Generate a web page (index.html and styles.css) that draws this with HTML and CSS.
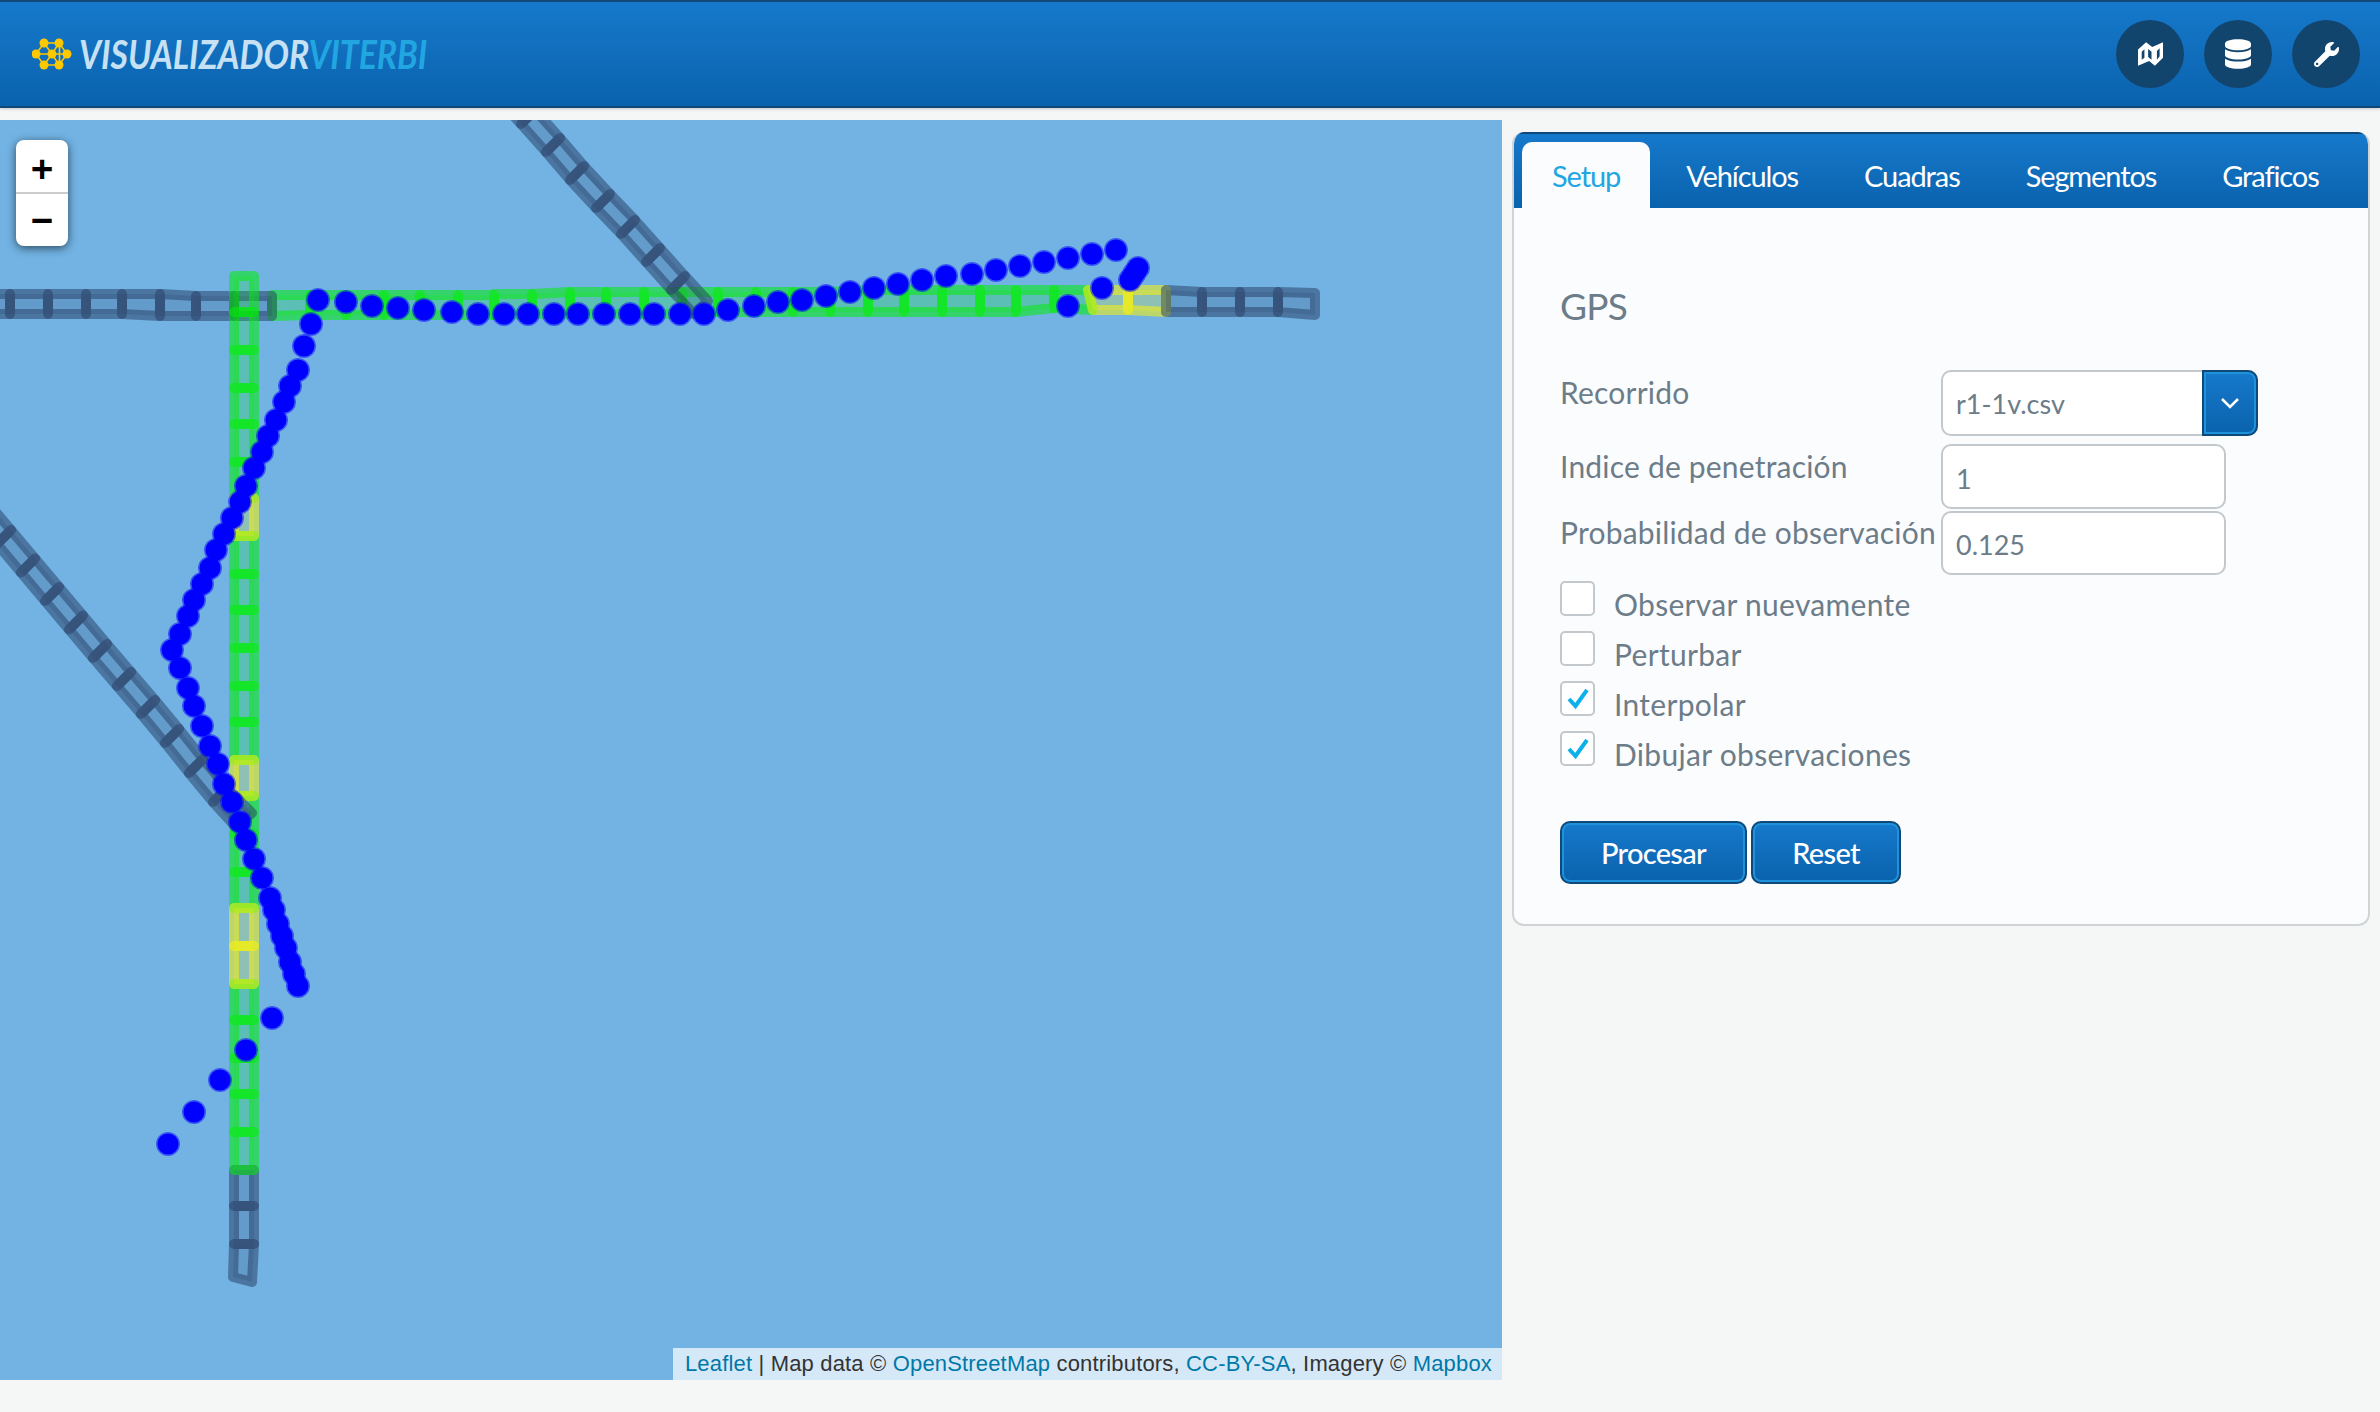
FILE: index.html
```html
<!DOCTYPE html>
<html lang="es">
<head>
<meta charset="utf-8">
<title>Visualizador Viterbi</title>
<link rel="stylesheet" href="styles.css">
</head>
<body>
<header class="topbar">
  <div class="brand">
    <svg class="brand-mark" viewBox="0 0 40 32" aria-hidden="true">
      <g class="mark-lines">
        <path d="M12 5 27 5 35 16 27 27 12 27 4 16Z"/>
        <path d="M12 5 20 16 12 27M27 5 20 16 27 27M4 16H35M27.500 5.500V27"/>
      </g>
      <g class="mark-nodes">
        <circle cx="12" cy="5" r="4.500"/><circle cx="27" cy="5" r="4.500"/>
        <circle cx="4" cy="16" r="4.500"/><circle cx="20" cy="16" r="4.500"/><circle cx="35" cy="16" r="4.500"/>
        <circle cx="12" cy="27" r="4.500"/><circle cx="27" cy="27" r="4.500"/>
      </g>
    </svg>
    <span class="brand-name"><span class="brand-a">VISUALIZADOR</span><span class="brand-b">VITERBI</span></span>
  </div>
  <nav class="top-actions">
    <a class="round-btn" aria-label="Mapa">
      <svg class="ico-map" viewBox="38 34 74 70" aria-hidden="true"><path fill-rule="evenodd" d="M38 56 62 34 80 48 112 34V80L88 104 71 90 38 104ZM49 62V86L57 80V55ZM68 54V78L78 86V62ZM94 60V86L102 76V52Z"/></svg>
    </a>
    <a class="round-btn" aria-label="Datos">
      <svg class="ico-db" viewBox="0 0 448 512" aria-hidden="true"><path d="M448 73.143v45.714C448 159.143 347.667 192 224 192S0 159.143 0 118.857V73.143C0 32.857 100.333 0 224 0s224 32.857 224 73.143zM448 176v102.857C448 319.143 347.667 352 224 352S0 319.143 0 278.857V176c48.125 33.143 136.208 48.572 224 48.572S399.874 209.143 448 176zm0 160v102.857C448 479.143 347.667 512 224 512S0 479.143 0 438.857V336c48.125 33.143 136.208 48.572 224 48.572S399.874 369.143 448 336z"/></svg>
    </a>
    <a class="round-btn" aria-label="Ajustes">
      <svg class="ico-wrench" viewBox="0 0 512 512" aria-hidden="true"><path d="M507.730 109.100c-2.240-9.030-13.540-12.090-20.120-5.510l-74.360 74.360-67.880-11.310-11.310-67.880 74.360-74.360c6.620-6.620 3.430-17.900-5.660-20.160-47.380-11.740-99.550.91-136.580 37.930-39.640 39.640-50.550 97.100-34.050 147.200L18.740 402.760c-24.990 24.990-24.990 65.510 0 90.500 24.990 24.990 65.510 24.990 90.500 0l213.210-213.210c50.120 16.710 107.470 5.680 147.370-34.220 37.070-37.070 49.700-89.320 37.910-136.730zM64 472c-13.250 0-24-10.750-24-24 0-13.260 10.750-24 24-24s24 10.740 24 24c0 13.250-10.750 24-24 24z"/></svg>
    </a>
  </nav>
</header>

<main class="layout">
  <section class="map">
    <svg class="map-canvas" viewBox="0 120 1502 1260" aria-hidden="true">
      <g class="cells green">
        <polygon points="272,295 310,295 310,315 272,316"/>
        <polygon points="310,295 346,295 346,315 310,315"/>
        <polygon points="346,295 384,295 384,315 346,315"/>
        <polygon points="384,295 420,295 420,315 384,315"/>
        <polygon points="420,295 458,295 458,315 420,315"/>
        <polygon points="458,295 494,295 494,315 458,315"/>
        <polygon points="494,294 532,294 532,314 494,315"/>
        <polygon points="532,294 570,292 570,314 532,314"/>
        <polygon points="570,292 606,292 606,314 570,314"/>
        <polygon points="606,292 644,292 644,314 606,314"/>
        <polygon points="644,292 682,292 682,314 644,314"/>
        <polygon points="682,292 718,292 718,312 682,314"/>
        <polygon points="718,292 756,292 756,312 718,312"/>
        <polygon points="756,292 793,292 793,312 756,312"/>
        <polygon points="793,292 830,292 830,312 793,312"/>
        <polygon points="830,292 868,290 868,312 830,312"/>
        <polygon points="868,290 904,290 904,312 868,312"/>
        <polygon points="904,290 942,290 942,312 904,312"/>
        <polygon points="942,290 980,290 980,312 942,312"/>
        <polygon points="980,290 1016,290 1016,312 980,312"/>
        <polygon points="1016,290 1054,290 1054,308 1016,312"/>
        <polygon points="1054,290 1088,290 1093,310 1054,308"/>
      </g>
      <g class="cells yellow">
        <polygon points="1088,290 1128,290 1128,310 1093,310"/>
        <polygon points="1128,290 1166,290 1166,312 1128,310"/>
      </g>
      <g class="cells grey">
        <polygon points="-26,294 10,294 10,314 -26,314"/>
        <polygon points="10,294 48,294 48,314 10,314"/>
        <polygon points="48,294 86,294 86,314 48,314"/>
        <polygon points="86,294 122,294 122,314 86,314"/>
        <polygon points="122,294 160,294 160,316 122,314"/>
        <polygon points="160,294 196,296 196,316 160,316"/>
        <polygon points="196,296 234,296 234,316 196,316"/>
        <polygon points="234,296 272,296 272,316 234,316"/>
        <polygon points="1166,290 1202,292 1202,312 1166,312"/>
        <polygon points="1202,292 1240,292 1240,312 1202,312"/>
        <polygon points="1240,292 1278,292 1278,312 1240,312"/>
        <polygon points="1278,292 1315,293 1315,315 1278,312"/>
        <polygon points="234,1170 254,1170 254,1206 234,1206"/>
        <polygon points="234,1206 254,1206 254,1244 234,1244"/>
        <polygon points="234,1244 254,1244 252,1282 233,1277"/>
      </g>
      <g class="cells green">
        <polygon points="234,276 254,276 254,312 234,312"/>
        <polygon points="234,312 254,312 254,350 234,350"/>
        <polygon points="234,350 254,350 254,388 234,388"/>
        <polygon points="234,388 254,388 254,424 234,424"/>
        <polygon points="234,424 254,424 254,462 234,462"/>
        <polygon points="234,462 254,462 254,498 234,498"/>
        <polygon points="234,536 254,536 254,574 234,574"/>
        <polygon points="234,574 254,574 254,610 234,610"/>
        <polygon points="234,610 254,610 254,648 234,648"/>
        <polygon points="234,648 254,648 254,686 234,686"/>
        <polygon points="234,686 254,686 254,722 234,722"/>
        <polygon points="234,722 254,722 254,760 234,760"/>
        <polygon points="234,796 254,796 254,834 234,834"/>
        <polygon points="234,834 254,834 254,872 234,872"/>
        <polygon points="234,872 254,872 254,908 234,908"/>
        <polygon points="234,984 254,984 254,1020 234,1020"/>
        <polygon points="234,1020 254,1020 254,1058 234,1058"/>
        <polygon points="234,1058 254,1058 254,1094 234,1094"/>
        <polygon points="234,1094 254,1094 254,1132 234,1132"/>
        <polygon points="234,1132 254,1132 254,1170 234,1170"/>
      </g>
      <g class="cells yellow">
        <polygon points="234,498 254,498 254,536 234,536"/>
        <polygon points="234,760 254,760 254,796 234,796"/>
        <polygon points="234,908 254,908 254,946 234,946"/>
        <polygon points="234,946 254,946 254,984 234,984"/>
      </g>
      <g class="cells grey">
        <polygon points="-27,515.500 -13,501.500 11,530 -3,544"/>
        <polygon points="-3,544 11,530 35,558.500 21,572.500"/>
        <polygon points="21,572.500 35,558.500 59,587 45,601"/>
        <polygon points="45,601 59,587 83,615.500 69,629.500"/>
        <polygon points="69,629.500 83,615.500 107,644 93,658"/>
        <polygon points="93,658 107,644 131,672 117,686"/>
        <polygon points="117,686 131,672 155,700 141,714"/>
        <polygon points="141,714 155,700 179,729 165,743"/>
        <polygon points="165,743 179,729 203,759 189,773"/>
        <polygon points="189,773 203,759 227,788 213,802"/>
        <polygon points="213,802 227,788 252,813 235,826"/>
        <polygon points="496,97 510,83 535,110 521,124"/>
        <polygon points="521,124 535,110 560,138 546,152"/>
        <polygon points="546,152 560,138 584,166 570,180"/>
        <polygon points="570,180 584,166 610,194 596,208"/>
        <polygon points="596,208 610,194 635,220 621,234"/>
        <polygon points="621,234 635,220 660,248 646,262"/>
        <polygon points="646,262 660,248 685,276 671,290"/>
        <polygon points="671,290 685,276 708,301 694,314"/>
      </g>
      <g class="dots">
        <circle cx="318" cy="300" r="10.500"/><circle cx="346" cy="302" r="10.500"/><circle cx="372" cy="306" r="10.500"/><circle cx="398" cy="308" r="10.500"/><circle cx="424" cy="310" r="10.500"/><circle cx="452" cy="312" r="10.500"/><circle cx="478" cy="314" r="10.500"/><circle cx="504" cy="314" r="10.500"/><circle cx="528" cy="314" r="10.500"/><circle cx="554" cy="314" r="10.500"/><circle cx="578" cy="314" r="10.500"/><circle cx="604" cy="314" r="10.500"/><circle cx="630" cy="314" r="10.500"/><circle cx="654" cy="314" r="10.500"/><circle cx="680" cy="314" r="10.500"/><circle cx="704" cy="314" r="10.500"/><circle cx="728" cy="310" r="10.500"/><circle cx="754" cy="306" r="10.500"/><circle cx="778" cy="302" r="10.500"/><circle cx="802" cy="300" r="10.500"/><circle cx="826" cy="296" r="10.500"/><circle cx="850" cy="292" r="10.500"/><circle cx="874" cy="288" r="10.500"/><circle cx="898" cy="284" r="10.500"/><circle cx="922" cy="280" r="10.500"/><circle cx="946" cy="276" r="10.500"/><circle cx="972" cy="274" r="10.500"/><circle cx="996" cy="270" r="10.500"/><circle cx="1020" cy="266" r="10.500"/><circle cx="1044" cy="262" r="10.500"/><circle cx="1068" cy="258" r="10.500"/><circle cx="1092" cy="254" r="10.500"/><circle cx="1116" cy="250" r="10.500"/><circle cx="1138" cy="268" r="10.500"/><circle cx="1134" cy="274" r="10.500"/><circle cx="1130" cy="280" r="10.500"/><circle cx="1102" cy="288" r="10.500"/><circle cx="1068" cy="306" r="10.500"/>
        <circle cx="311" cy="324" r="10.500"/><circle cx="304" cy="346" r="10.500"/><circle cx="298" cy="370" r="10.500"/><circle cx="290" cy="386" r="10.500"/><circle cx="284" cy="402" r="10.500"/><circle cx="276" cy="420" r="10.500"/><circle cx="268" cy="436" r="10.500"/><circle cx="262" cy="452" r="10.500"/><circle cx="254" cy="468" r="10.500"/><circle cx="246" cy="486" r="10.500"/><circle cx="240" cy="502" r="10.500"/><circle cx="232" cy="518" r="10.500"/><circle cx="224" cy="534" r="10.500"/><circle cx="216" cy="550" r="10.500"/><circle cx="210" cy="568" r="10.500"/><circle cx="202" cy="584" r="10.500"/><circle cx="194" cy="600" r="10.500"/><circle cx="188" cy="616" r="10.500"/><circle cx="180" cy="634" r="10.500"/><circle cx="172" cy="650" r="10.500"/><circle cx="180" cy="668" r="10.500"/><circle cx="188" cy="688" r="10.500"/><circle cx="194" cy="706" r="10.500"/><circle cx="202" cy="726" r="10.500"/><circle cx="210" cy="746" r="10.500"/><circle cx="218" cy="764" r="10.500"/><circle cx="224" cy="784" r="10.500"/><circle cx="232" cy="802" r="10.500"/><circle cx="240" cy="822" r="10.500"/><circle cx="246" cy="840" r="10.500"/><circle cx="254" cy="859" r="10.500"/><circle cx="262" cy="878" r="10.500"/><circle cx="270" cy="898" r="10.500"/><circle cx="274" cy="910" r="10.500"/><circle cx="278" cy="924" r="10.500"/><circle cx="282" cy="936" r="10.500"/><circle cx="286" cy="948" r="10.500"/><circle cx="290" cy="962" r="10.500"/><circle cx="294" cy="974" r="10.500"/><circle cx="298" cy="986" r="10.500"/><circle cx="272" cy="1018" r="10.500"/><circle cx="246" cy="1050" r="10.500"/><circle cx="220" cy="1080" r="10.500"/><circle cx="194" cy="1112" r="10.500"/><circle cx="168" cy="1144" r="10.500"/>
      </g>
    </svg>
    <div class="zoom-ctl">
      <a class="zoom-btn zoom-in">+</a>
      <a class="zoom-btn zoom-out">−</a>
    </div>
    <div class="attribution"><a>Leaflet</a> | Map data © <a>OpenStreetMap</a> contributors, <a>CC-BY-SA</a>, Imagery © <a>Mapbox</a></div>
  </section>

  <aside class="panel">
    <ul class="tabs">
      <li class="tab tab-active">Setup</li>
      <li class="tab">Vehículos</li>
      <li class="tab">Cuadras</li>
      <li class="tab">Segmentos</li>
      <li class="tab">Graficos</li>
    </ul>
    <div class="panel-body">
      <h2 class="section-title">GPS</h2>
      <div class="form-row row-select">
        <label class="field-label">Recorrido</label>
        <div class="select">
          <span class="select-value">r1-1v.csv</span>
          <span class="select-btn">
            <svg viewBox="0 0 20 12" aria-hidden="true"><path d="M2 2 10 10 18 2"/></svg>
          </span>
        </div>
      </div>
      <div class="form-row row-a">
        <label class="field-label">Indice de penetración</label>
        <input class="text-input" type="text" value="1">
      </div>
      <div class="form-row row-b">
        <label class="field-label">Probabilidad de observación</label>
        <input class="text-input" type="text" value="0.125">
      </div>
      <div class="checks">
        <div class="check-row"><span class="check-box"></span><span class="check-label">Observar nuevamente</span></div>
        <div class="check-row"><span class="check-box"></span><span class="check-label">Perturbar</span></div>
        <div class="check-row"><span class="check-box"><svg viewBox="0 0 24 24" aria-hidden="true"><path d="M3 12 9.500 19 21 3"/></svg></span><span class="check-label">Interpolar</span></div>
        <div class="check-row"><span class="check-box"><svg viewBox="0 0 24 24" aria-hidden="true"><path d="M3 12 9.500 19 21 3"/></svg></span><span class="check-label">Dibujar observaciones</span></div>
      </div>
      <div class="actions">
        <button class="btn btn-process" type="button">Procesar</button>
        <button class="btn btn-reset" type="button">Reset</button>
      </div>
    </div>
  </aside>
</main>
</body>
</html>
```
FILE: styles.css
```css
* { box-sizing: border-box; }
html, body { height: 100%; }
body {
  margin: 0;
  background: #f5f7f7;
  font-family: Lato, "Noto Sans", sans-serif;
  color: #6c7d89;
  overflow: hidden;
}

/* top bar */
.topbar {
  height: 108px;
  display: flex;
  align-items: center;
  justify-content: space-between;
  padding: 0 20px 0 32px;
  background: linear-gradient(#1679cb, #0a62ad);
  border-top: 2px solid #10487a;
  border-bottom: 2px solid #10487a;
  box-shadow: 0 1px 3px rgba(0, 0, 0, .2);
}
.brand { display: flex; align-items: center; gap: 7px; }
.brand-mark { width: 40px; height: 32px; }
.mark-lines path { fill: none; stroke: #fdc800; stroke-width: 1.6; }
.mark-nodes circle { fill: #fdc800; }
.brand-name {
  display: inline-block;
  font-family: Lato, sans-serif;
  font-style: italic;
  font-size: 40px;
  line-height: 1;
  white-space: nowrap;
  transform: scaleX(.845);
  transform-origin: left center;
}
.brand-a { color: #c6e1f4; font-weight: 700; }
.brand-b { color: #22a6e2; font-weight: 700; }
.top-actions { display: flex; gap: 20px; }
.round-btn {
  width: 68px;
  height: 68px;
  border-radius: 50%;
  background: #12456e;
  display: flex;
  align-items: center;
  justify-content: center;
}
.round-btn svg { fill: #fff; display: block; }
.ico-map { width: 25px; height: 26px; }
.ico-db { width: 26px; height: 30px; }
.ico-wrench { width: 25px; height: 25px; }

/* page */
.layout { display: flex; align-items: flex-start; margin-top: 12px; }

/* map */
.map {
  position: relative;
  width: 1502px;
  height: 1260px;
  flex: none;
  background: #72b3e4;
  overflow: hidden;
}
.map-canvas { display: block; width: 100%; height: 100%; }
.cells polygon { stroke-width: 10; stroke-linejoin: round; stroke-opacity: .53; fill-opacity: .2; }
.grey polygon { stroke: #2a4166; fill: #2a4166; }
.green polygon { stroke: #00f000; fill: #00f000; }
.yellow polygon { stroke: #fff500; fill: #fff500; }
.dots circle { fill: #0000ff; stroke: #0000ff; stroke-width: 3; stroke-opacity: .5; }
.zoom-ctl {
  position: absolute;
  left: 16px;
  top: 20px;
  width: 52px;
  border-radius: 8px;
  background: #fff;
  box-shadow: 0 2px 10px rgba(0, 0, 0, .6);
  overflow: hidden;
}
.zoom-btn {
  display: block;
  height: 52px;
  line-height: 52px;
  text-align: center;
  font-family: "DejaVu Sans Mono", monospace;
  font-weight: 700;
  font-size: 36px;
  color: #000;
}
.zoom-in { line-height: 58px; }
.zoom-out { height: 54px; border-top: 2px solid #ccc; }
.attribution {
  position: absolute;
  right: 0;
  bottom: 0;
  height: 32px;
  padding: 0 10px 0 12px;
  background: rgba(255, 255, 255, .7);
  font-family: "Liberation Sans", Arial, sans-serif;
  font-size: 22px;
  line-height: 32px;
  letter-spacing: .17px;
  color: #333;
  white-space: nowrap;
}
.attribution a { color: #0078a8; }

/* panel */
.panel {
  width: 858px;
  height: 794px;
  margin: 12px 0 0 10px;
  background: #fbfcfe;
  border: 2px solid #d0d4d6;
  border-top: 0;
  border-radius: 12px;
  overflow: hidden;
  flex: none;
}
.tabs {
  list-style: none;
  margin: 0;
  padding: 8px 0 0 8px;
  height: 76px;
  display: flex;
  gap: 6px;
  background: linear-gradient(#1679cb, #0a62ad);
  border-top: 2px solid #10487a;
}
.tab {
  padding: 0 30px;
  height: 66px;
  line-height: 68px;
  font-size: 29px;
  letter-spacing: -1.100px;
  color: #fff;
  white-space: nowrap;
}
.tab-active {
  background: #fbfcfe;
  color: #22a6e2;
  border-radius: 10px 10px 0 0;
}
.panel-body { padding: 0 0 0 46px; }
.section-title {
  margin: 0;
  padding-top: 70px;
  height: 162px;
  font-size: 37px;
  line-height: 56px;
  font-weight: 400;
  letter-spacing: -.7px;
  color: #6c7d89;
}
.form-row { display: flex; align-items: flex-start; }
.field-label {
  width: 381px;
  flex: none;
  font-size: 30px;
  line-height: 36px;
  letter-spacing: .2px;
  white-space: nowrap;
}
.row-select { margin-bottom: 8px; }
.row-select .field-label { padding-top: 4px; }
.row-a { margin-bottom: 2px; }
.row-a .field-label { padding-top: 4px; }
.row-b .field-label { padding-top: 3px; }
.select {
  width: 317px;
  height: 66px;
  display: flex;
  background: #fff;
  border: 2px solid #c3c8cc;
  border-radius: 10px;
  position: relative;
}
.select-value {
  flex: 1;
  padding-left: 13px;
  font-size: 27px;
  line-height: 64px;
}
.select-btn {
  position: absolute;
  right: -2px;
  top: -2px;
  width: 56px;
  height: 66px;
  display: flex;
  align-items: center;
  justify-content: center;
  border: 2px solid #10487a;
  border-radius: 0 10px 10px 0;
  background: linear-gradient(#1679cb, #0a62ad);
  box-shadow: inset 0 0 0 2px #1f93da;
}
.select-btn svg { width: 20px; height: 12px; fill: none; stroke: #fff; stroke-width: 2.500; }
.text-input {
  width: 285px;
  height: 65px;
  padding: 3px 13px 0;
  background: #fff;
  border: 2px solid #c3c8cc;
  border-radius: 10px;
  font-family: inherit;
  font-size: 27px;
  color: #6c7d89;
}
.row-b .text-input { height: 64px; }
.checks { margin-top: 6px; display: flex; flex-direction: column; gap: 15px; }
.check-row { display: flex; height: 35px; }
.check-box {
  width: 35px;
  height: 35px;
  flex: none;
  background: #fff;
  border: 2px solid #c3c8cc;
  border-radius: 5px;
  display: flex;
  align-items: center;
  justify-content: center;
}
.check-box svg { width: 24px; height: 24px; fill: none; stroke: #0db0ea; stroke-width: 4; }
.check-label {
  margin-left: 19px;
  font-size: 30px;
  line-height: 46px;
  letter-spacing: .3px;
  white-space: nowrap;
}
.actions { margin-top: 55px; display: flex; gap: 4px; }
.btn {
  height: 63px;
  padding: 0;
  color: #fff;
  font-family: inherit;
  font-size: 29px;
  font-weight: 500;
  letter-spacing: -.7px;
  border: 2px solid #10487a;
  border-radius: 10px;
  background: linear-gradient(#1679cb, #0a62ad);
  box-shadow: inset 0 0 0 2px #1f93da;
}
.btn-process { width: 187px; }
.btn-reset { width: 150px; }
```
